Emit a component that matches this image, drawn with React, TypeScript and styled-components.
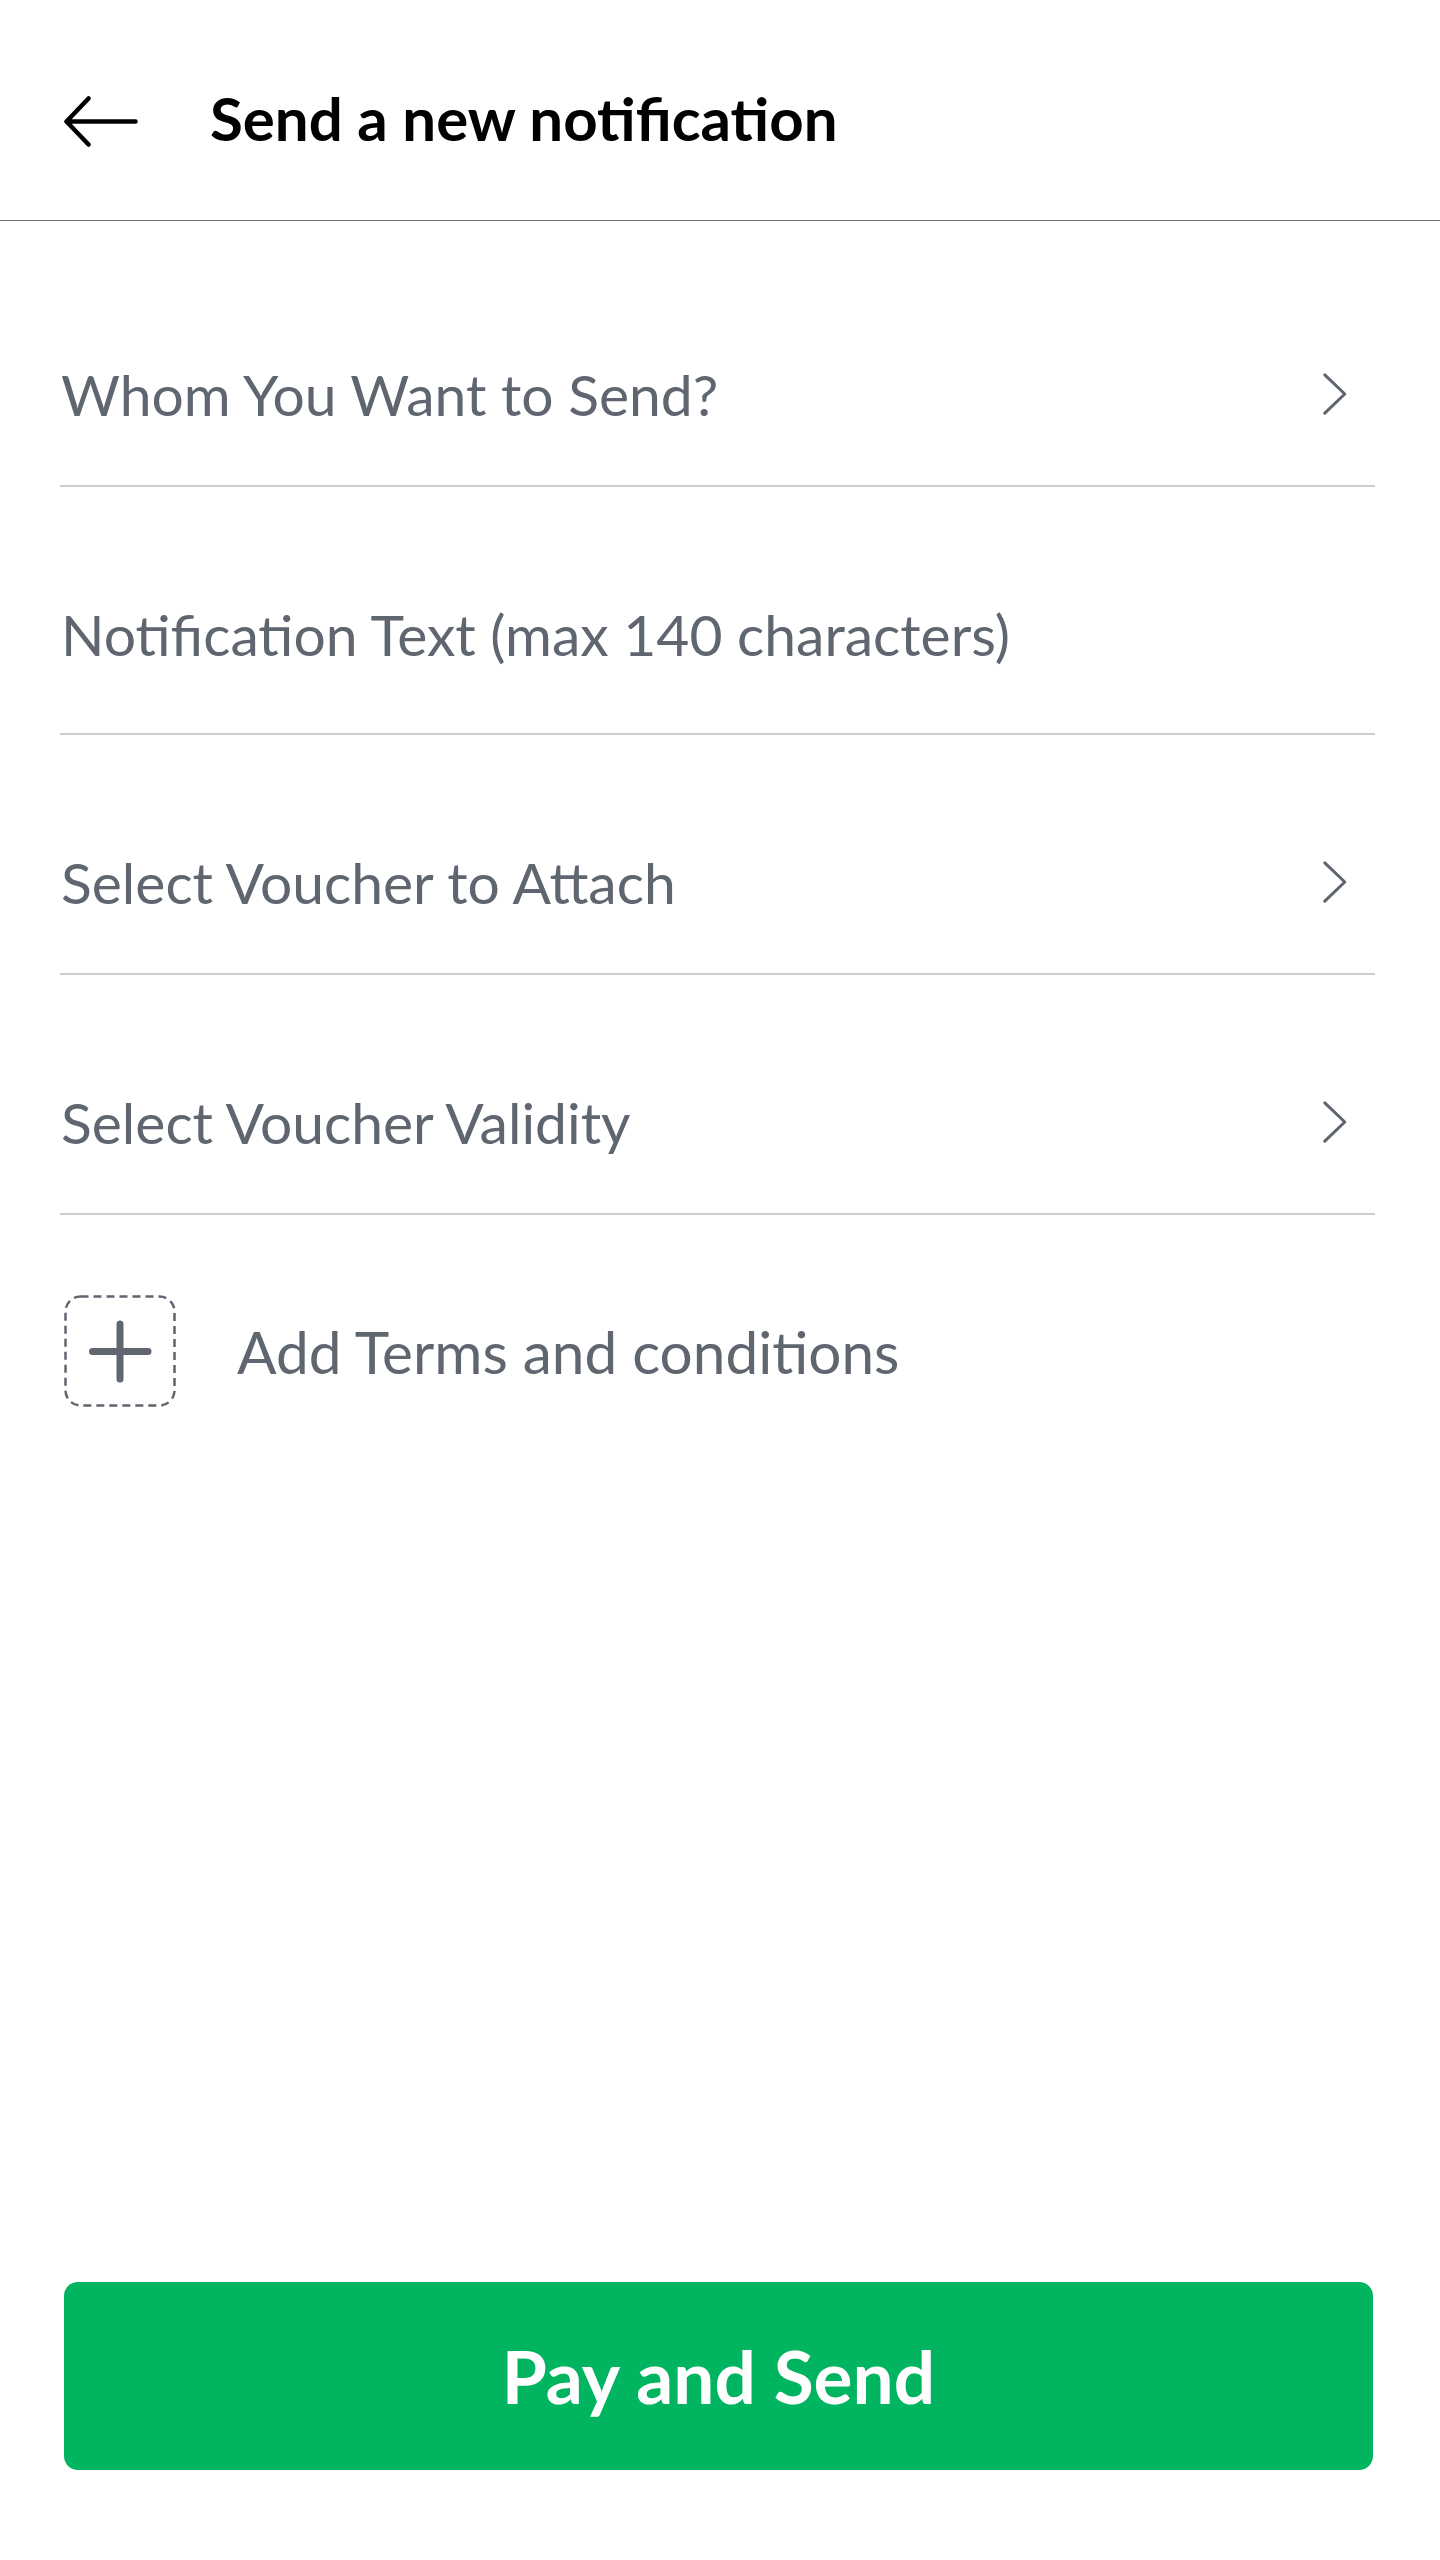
import React from "react";
import styled, { createGlobalStyle } from "styled-components";

const GlobalStyle = createGlobalStyle`
  html, body { margin: 0; padding: 0; background: #ffffff; }
  body { font-family: "Lato", "Noto Sans", sans-serif; -webkit-font-smoothing: antialiased; }
  * { box-sizing: border-box; }
`;

const Page = styled.div`
  min-height: 100vh;
  display: flex;
  flex-direction: column;
  background: #fff;
`;

const Header = styled.header`
  height: 221px;
  display: flex;
  align-items: center;
  padding: 22px 0 0 64px;
  border-bottom: 1px solid #6a717b;
`;

const BackButton = styled.button`
  border: 0;
  background: none;
  padding: 0;
  margin: 0 72px 0 0;
  width: 74px;
  height: 51px;
  display: flex;
  cursor: pointer;
`;

const Title = styled.h1`
  margin: 0 0 6px;
  font-size: 60px;
  font-weight: 700;
  color: #000;
  line-height: 1;
`;

const List = styled.div`
  padding: 26px 65px 0 60px;
  display: flex;
  flex-direction: column;
`;

const Row = styled.div<{ $bottom?: number }>`
  display: flex;
  align-items: center;
  justify-content: space-between;
  padding: 108px 28px ${(p) => p.$bottom ?? 52}px 1px;
  border-bottom: 2px solid #cbced3;
`;

const RowLabel = styled.span`
  font-size: 57px;
  line-height: 78px;
  color: #5f6670;
  font-weight: 400;
`;

const TermsRow = styled.div`
  display: flex;
  align-items: center;
  gap: 61px;
  margin-top: 80px;
  padding-left: 4px;
`;

const AddBox = styled.div`
  width: 112px;
  height: 112px;
  flex: none;
  display: flex;
`;

const TermsLabel = styled(RowLabel)`
  font-size: 58.5px;
`;

const Spacer = styled.div`
  flex: 1;
`;

const PayButton = styled.button`
  margin: 0 67px 90px 64px;
  height: 188px;
  border: 0;
  border-radius: 14px;
  background: #00b460;
  color: #fff;
  font-family: "Lato", "Noto Sans", sans-serif;
  font-size: 73px;
  font-weight: 700;
  cursor: pointer;
`;

const Chevron = () => (
  <svg width="24" height="42" viewBox="0 0 24 42" fill="none">
    <polyline points="1.8,1.8 21.8,21 1.8,40.2" stroke="#5f6670" strokeWidth="3" strokeLinecap="round" strokeLinejoin="round" />
  </svg>
);

const BackArrow = () => (
  <svg width="74" height="51" viewBox="0 0 74 51" fill="none">
    <path d="M71.5 25.5H3M24.5 2.5L2.5 25.5L24.5 48.5" stroke="#000" strokeWidth="4.5" strokeLinecap="round" strokeLinejoin="round" />
  </svg>
);

const PlusBox = () => (
  <svg width="112" height="112" viewBox="0 0 112 112" fill="none">
    <rect x="1.5" y="1.5" width="109" height="109" rx="15" stroke="#5f6670" strokeWidth="2.5" strokeDasharray="8 5" />
    <path d="M56 29V84M28.5 56.5H84" stroke="#5f6670" strokeWidth="7" strokeLinecap="round" />
  </svg>
);

const rows = [
  { label: "Whom You Want to Send?", chevron: true, bottom: 52 },
  { label: "Notification Text (max 140 characters)", chevron: false, bottom: 60 },
  { label: "Select Voucher to Attach", chevron: true, bottom: 52 },
  { label: "Select Voucher Validity", chevron: true, bottom: 52 },
];

export default function App() {
  return (
    <>
      <GlobalStyle />
      <Page>
        <Header>
          <BackButton aria-label="Back">
            <BackArrow />
          </BackButton>
          <Title>Send a new notification</Title>
        </Header>
        <List>
          {rows.map((r) => (
            <Row key={r.label} $bottom={r.bottom}>
              <RowLabel>{r.label}</RowLabel>
              {r.chevron && <Chevron />}
            </Row>
          ))}
          <TermsRow>
            <AddBox>
              <PlusBox />
            </AddBox>
            <TermsLabel>Add Terms and conditions</TermsLabel>
          </TermsRow>
        </List>
        <Spacer />
        <PayButton>Pay and Send</PayButton>
      </Page>
    </>
  );
}
